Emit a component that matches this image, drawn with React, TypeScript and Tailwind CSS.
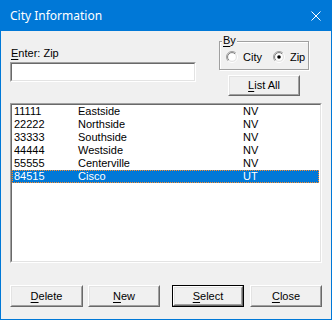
import React from "react";

const font = { fontFamily: '"Liberation Sans", Arial, sans-serif' };

function Btn({ u, rest, isDefault = false, w = "w-[72px]", h = "h-[22px]" }: { u: string; rest: string; isDefault?: boolean; w?: string; h?: string }) {
  const inner = (
    <div className="flex-1 flex border border-t-white border-l-white border-r-[#696969] border-b-[#696969]">
      <div className="flex-1 flex items-center justify-center border border-t-[#e3e3e3] border-l-[#e3e3e3] border-r-[#a0a0a0] border-b-[#a0a0a0] bg-[#f0f0f0] text-[11px] text-black leading-[13px]">
        <span><span className="underline underline-offset-2">{u}</span>{rest}</span>
      </div>
    </div>
  );
  return (
    <div className={`${w} ${h} flex ${isDefault ? "border border-black" : ""}`}>{inner}</div>
  );
}

function Radio({ checked }: { checked: boolean }) {
  return (
    <svg width="12" height="12" viewBox="0 0 12 12" className="shrink-0">
      <circle cx="6" cy="6" r="5.5" fill="#e3e3e3" />
      <path d="M2.1 9.9 A5.5 5.5 0 0 1 9.9 2.1" stroke="#a0a0a0" strokeWidth="1" fill="none" />
      <path d="M9.9 2.1 A5.5 5.5 0 0 1 2.1 9.9" stroke="#ffffff" strokeWidth="1" fill="none" />
      <path d="M3 9 A4.2 4.2 0 0 1 9 3" stroke="#696969" strokeWidth="1" fill="none" />
      <circle cx="6" cy="6" r="3.8" fill="white" />
      {checked && <circle cx="6" cy="6" r="1.8" fill="black" />}
    </svg>
  );
}

const rows = [
  ["11111", "Eastside", "NV"],
  ["22222", "Northside", "NV"],
  ["33333", "Southside", "NV"],
  ["44444", "Westside", "NV"],
  ["55555", "Centerville", "NV"],
  ["84515", "Cisco", "UT"],
];

export default function App() {
  return (
    <div className="w-[332px] h-[320px] bg-[#0078d7] flex flex-col" style={font}>
      <div className="h-[31px] flex items-center justify-between pl-[10px] pr-[11px] shrink-0">
        <span className="text-white text-[12px]" style={{ fontFamily: '"Noto Sans", "Open Sans", sans-serif' }}>City Information</span>
        <svg width="10" height="10" viewBox="0 0 10 10">
          <path d="M0.5 0.5 L9.5 9.5 M9.5 0.5 L0.5 9.5" stroke="white" strokeWidth="1" />
        </svg>
      </div>
      <div className="flex-1 mx-[1px] mb-[1px] bg-[#f0f0f0] flex flex-col text-[11px] leading-[13px] text-black">
        <div className="flex h-[72px]">
          <div className="ml-[9px] mt-[16px] flex flex-col w-[186px]">
            <div className="h-[13px] pl-[1px]"><span className="underline underline-offset-2">E</span>nter: Zip</div>
            <div className="mt-[2px] h-[20px] flex border border-t-[#a0a0a0] border-l-[#a0a0a0] border-r-white border-b-white">
              <div className="flex-1 border border-t-[#696969] border-l-[#696969] border-r-[#e3e3e3] border-b-[#e3e3e3] bg-white" />
            </div>
          </div>
          <div className="ml-[23px] flex flex-col">
            <div className="relative mt-[10px] w-[90px] h-[29px] border border-[#a0a0a0] shadow-[inset_1px_1px_0_white,1px_1px_0_white]">
              <div className="absolute left-[2px] top-[-8px] px-[1px] bg-[#f0f0f0] h-[13px] leading-[13px]">
                <span className="underline underline-offset-2">B</span>y
              </div>
              <div className="flex items-center mt-[9px] ml-[6px] h-[12px]">
                <Radio checked={false} />
                <span className="ml-[5px]">City</span>
                <span className="ml-[11px] flex"><Radio checked={true} /></span>
                <span className="ml-[5px]">Zip</span>
              </div>
            </div>
            <div className="ml-[9px] mt-[5px]">
              <Btn u="L" rest="ist All" h="h-[21px]" />
            </div>
          </div>
        </div>
        <div className="ml-[9px] w-[312px] h-[160px] flex border border-t-[#a0a0a0] border-l-[#a0a0a0] border-r-white border-b-white">
          <div className="flex-1 border border-t-[#696969] border-l-[#696969] border-r-[#e3e3e3] border-b-[#e3e3e3] bg-white flex flex-col">
            {rows.map((r, i) => {
              const sel = i === rows.length - 1;
              return (
                <div
                  key={r[0]}
                  className={`h-[13px] mr-[1px] flex items-center ${sel ? "bg-[#0078d7] text-white outline-1 outline-dotted outline-[#ff8c28] -outline-offset-1" : ""}`}
                >
                  <span className="ml-[2px] w-[64px]">{r[0]}</span>
                  <span className="w-[165px]">{r[1]}</span>
                  <span>{r[2]}</span>
                </div>
              );
            })}
          </div>
        </div>
        <div className="flex mt-[22px] ml-[9px]">
          <Btn u="D" rest="elete" w="w-[73px]" />
          <div className="ml-[5px]"><Btn u="N" rest="ew" /></div>
          <div className="ml-[12px]"><Btn u="S" rest="elect" isDefault /></div>
          <div className="ml-[6px]"><Btn u="C" rest="lose" /></div>
        </div>
      </div>
    </div>
  );
}
